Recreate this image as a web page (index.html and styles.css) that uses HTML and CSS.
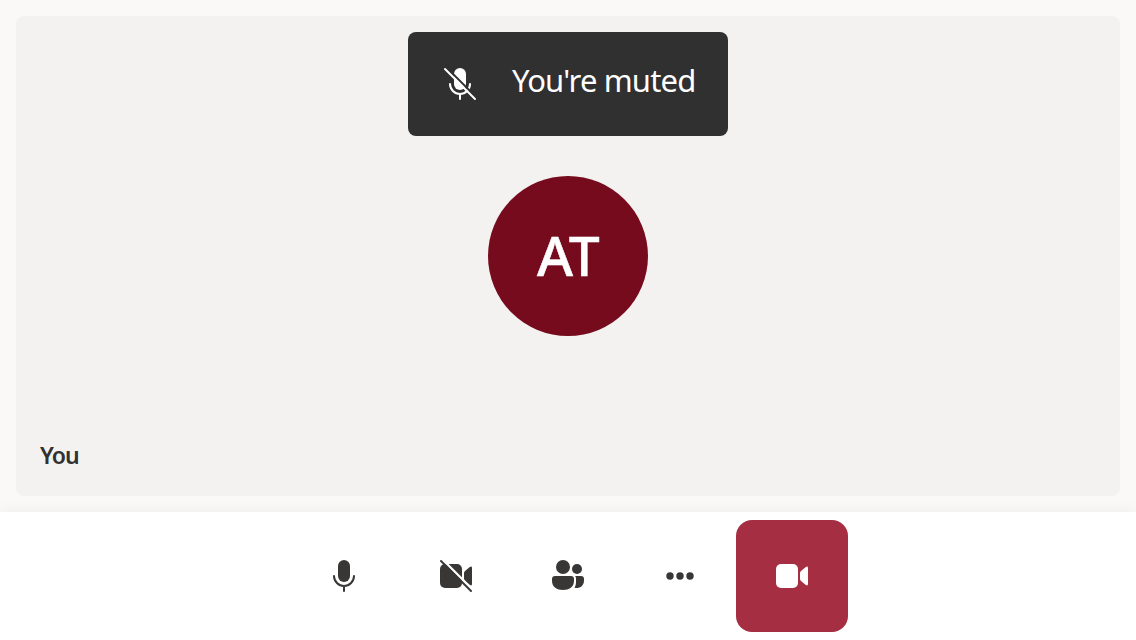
FILE: index.html
```html
<!DOCTYPE html>
<html lang="en">
<head>
<meta charset="utf-8">
<title>Call</title>
<link rel="stylesheet" href="styles.css">
</head>
<body>
<main class="stage">
  <section class="tile">
    <div class="toast" role="status">
      <svg class="icon" viewBox="0 0 32 32">
        <rect x="10" y="0" width="12" height="22" rx="6" fill="currentColor"/>
        <path d="M6 16a10 10 0 0 0 20 0M16 26v5" fill="none" stroke="currentColor" stroke-width="2" stroke-linecap="round"/>
        <path class="toast-gap" d="M2-1L34 31" stroke-width="2"/>
        <path d="M1 1L31 31" stroke="currentColor" stroke-width="2" stroke-linecap="round"/>
      </svg>
      <span class="toast-text">You're muted</span>
    </div>
    <div class="avatar"><span class="initials">AT</span></div>
    <span class="name">You</span>
  </section>
</main>
<nav class="controls">
  <button class="control" aria-label="Microphone">
    <svg class="icon" viewBox="0 0 32 32">
      <rect x="10" y="0" width="12" height="22" rx="6" fill="currentColor"/>
      <path d="M6 16a10 10 0 0 0 20 0M16 26v5" fill="none" stroke="currentColor" stroke-width="2" stroke-linecap="round"/>
    </svg>
  </button>
  <button class="control" aria-label="Camera">
    <svg class="icon" viewBox="0 0 32 32">
      <rect x="0" y="4" width="22" height="24" rx="5" fill="currentColor"/>
      <path d="M24 13Q24 11.800 25 11L29.800 7.100Q32 5.800 32 8V24Q32 26.200 29.800 24.900L25 21Q24 20.200 24 19Z" fill="currentColor"/>
      <path class="control-gap" d="M2-1L34 31" stroke-width="2.4"/>
      <path d="M1 1L31 31" stroke="currentColor" stroke-width="2" stroke-linecap="round"/>
    </svg>
  </button>
  <button class="control" aria-label="People">
    <svg class="icon" viewBox="0 0 32 32">
      <g fill="currentColor">
        <circle cx="11" cy="7" r="7"/>
        <circle cx="25" cy="9" r="5"/>
        <path d="M3 16H19Q22 16 22 19V21C22 27 17 30 11 30S0 27 0 21V19Q0 16 3 16Z"/>
        <path d="M23.2 16H29Q32 16 32 19V20.500C32 25.500 28.500 28 24.500 28Q23.500 28 22.500 27.800C23.500 26 24 24 24 21.500V19Q24 17.200 23.200 16Z"/>
      </g>
    </svg>
  </button>
  <button class="control" aria-label="More">
    <svg class="icon" viewBox="0 0 32 32">
      <g fill="currentColor"><circle cx="6" cy="16" r="3.7"/><circle cx="16" cy="16" r="3.7"/><circle cx="26" cy="16" r="3.7"/></g>
    </svg>
  </button>
  <button class="control control-end" aria-label="Leave">
    <svg class="icon" viewBox="0 0 32 32">
      <rect x="0" y="4" width="22" height="24" rx="5" fill="currentColor"/>
      <path d="M24 13Q24 11.800 25 11L29.800 7.100Q32 5.800 32 8V24Q32 26.200 29.800 24.900L25 21Q24 20.200 24 19Z" fill="currentColor"/>
    </svg>
  </button>
</nav>
</body>
</html>
```
FILE: styles.css
```css
* {
  box-sizing: border-box;
}

body {
  margin: 0;
  height: 640px;
  display: flex;
  flex-direction: column;
  overflow: hidden;
  background: #faf9f8;
  color: #323130;
  font-family: "Segoe UI", "Noto Sans", "Open Sans", sans-serif;
}

.stage {
  height: 512px;
  padding: 16px;
}

.tile {
  height: 480px;
  display: grid;
  place-items: center;
  position: relative;
  background: #f3f2f1;
  border-radius: 8px;
}

.toast {
  position: absolute;
  top: 16px;
  left: 392px;
  width: 320px;
  height: 104px;
  padding: 0 0 0 36px;
  display: flex;
  align-items: center;
  gap: 36px;
  background: #303030;
  color: #fff;
  border-radius: 8px;
}

.toast-text {
  font-size: 31px;
  font-weight: 400;
  line-height: 44px;
  padding-bottom: 8px;
  letter-spacing: -0.85px;
  white-space: nowrap;
}

.avatar {
  width: 160px;
  height: 160px;
  display: flex;
  align-items: center;
  justify-content: center;
  border-radius: 50%;
  background: #750b1c;
  color: #fff;
}

.initials {
  font-size: 55px;
  font-weight: 500;
  line-height: 72px;
  letter-spacing: -0.5px;
  padding-bottom: 2px;
  -webkit-text-stroke: 0.5px #fff;
}

.name {
  position: absolute;
  left: 24px;
  bottom: 25px;
  font-size: 23px;
  font-weight: 600;
  line-height: 32px;
  letter-spacing: -0.9px;
}

.icon {
  display: block;
  flex: none;
  width: 32px;
  height: 32px;
  overflow: visible;
}

.toast-gap {
  stroke: #303030;
}

.control-gap {
  stroke: #fff;
}

.controls {
  height: 128px;
  padding: 8px 0;
  display: flex;
  justify-content: center;
  background: #fff;
  box-shadow: 0 0 16px rgba(0, 0, 0, 0.06);
}

.control {
  width: 112px;
  height: 112px;
  padding: 0;
  display: flex;
  align-items: center;
  justify-content: center;
  border: 0;
  border-radius: 16px;
  background: transparent;
  color: #383736;
}

.control-end {
  background: #a52e43;
  color: #fff;
}
```
